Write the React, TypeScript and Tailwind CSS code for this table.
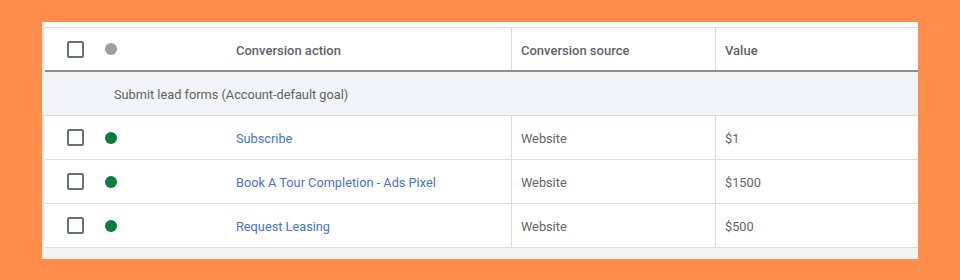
const rows = [
  { name: 'Subscribe', source: 'Website', value: '$1' },
  { name: 'Book A Tour Completion - Ads Pixel', source: 'Website', value: '$1500' },
  { name: 'Request Leasing', source: 'Website', value: '$500' },
]

function Checkbox() {
  return <div className="w-[17px] h-[17px] rounded-[2px] border-2 border-[#6b6e72]" />
}

export default function App() {
  return (
    <div
      className="w-[960px] h-[280px] bg-[#ff8e4d] pt-[22px] pl-[42px]"
      style={{ fontFamily: 'Roboto, "Liberation Sans", sans-serif' }}
    >
      <div className="w-[876px] h-[237px] bg-white border-l-[3px] border-[#eceef0] flex flex-col">
        <div className="h-[6px] border-b border-[#dadce0]" />

        {/* header */}
        <div className="h-[44px] flex border-b-2 border-[#8a8d91] text-[13px] font-medium text-[#5f6368]">
          <div className="w-[467px] flex items-center border-r border-[#dadce0]">
            <div className="ml-[22px]">
              <Checkbox />
            </div>
            <div className="ml-[21px] w-[12px] h-[12px] rounded-full bg-[#9aa0a6]" />
            <div className="ml-[119px] mt-[4px]">Conversion action</div>
          </div>
          <div className="w-[204px] flex items-center pl-[9px] border-r border-[#dadce0]">
            <span className="mt-[4px]">Conversion source</span>
          </div>
          <div className="flex-1 flex items-center pl-[9px]">
            <span className="mt-[4px]">Value</span>
          </div>
        </div>

        {/* group */}
        <div className="h-[44px] flex items-center bg-[#f1f3f4] border-b border-[#dadce0] text-[12.75px] text-[#5f6368] pl-[69px]">
          <span className="mt-[2px]">Submit lead forms (Account-default goal)</span>
        </div>

        {rows.map((r) => (
          <div key={r.name} className="h-[44px] flex border-b border-[#dadce0] text-[12.75px]">
            <div className="w-[467px] flex items-center border-r border-[#dadce0]">
              <div className="ml-[22px]">
                <Checkbox />
              </div>
              <div className="ml-[21px] w-[12px] h-[12px] rounded-full bg-[#0b7d3e]" />
              <div className="ml-[119px] mt-[2px] text-[#4473d4]">{r.name}</div>
            </div>
            <div className="w-[204px] flex items-center pl-[9px] border-r border-[#dadce0] text-[#5f6368]">
              <span className="mt-[2px]">{r.source}</span>
            </div>
            <div className="flex-1 flex items-center pl-[9px] text-[#5f6368]">
              <span className="mt-[2px]">{r.value}</span>
            </div>
          </div>
        ))}

        <div className="flex-1 bg-[#f1f3f4]" />
      </div>
    </div>
  )
}
